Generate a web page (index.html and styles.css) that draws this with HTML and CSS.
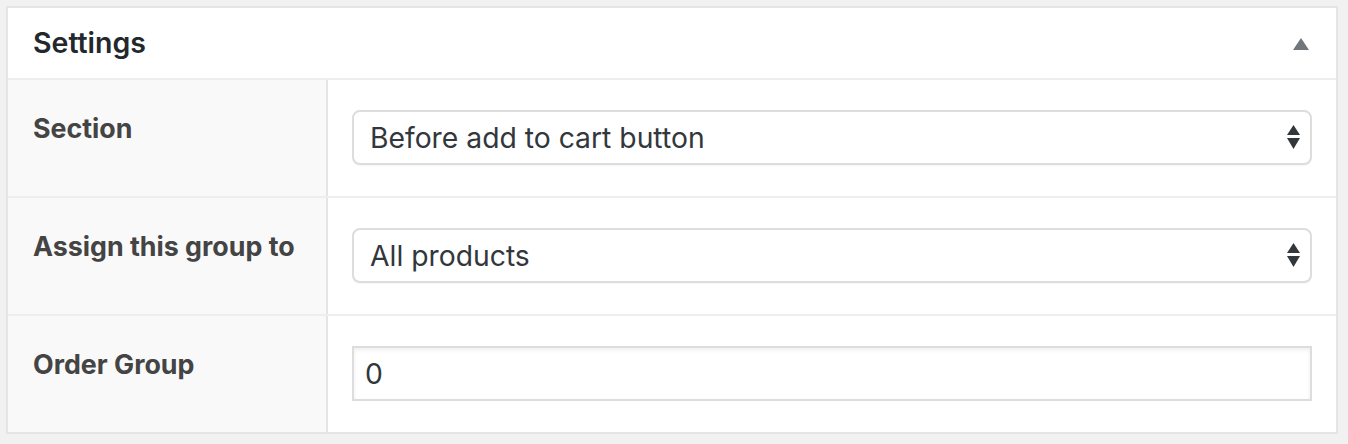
FILE: index.html
```html
<!DOCTYPE html>
<html>
<head>
<meta charset="utf-8">
<link rel="stylesheet" href="styles.css">
</head>
<body>
<div class="panel">
  <div class="panel-head">
    <h2 class="panel-title">Settings</h2>
    <svg class="toggle" width="16" height="12" viewBox="0 0 16 12"><polygon points="8,0 16,12 0,12" fill="#72777c"/></svg>
  </div>
  <div class="rows">
    <div class="row">
      <div class="label">Section</div>
      <div class="field">
        <div class="select">
          <span class="select-text">Before add to cart button</span>
          <svg class="arrows" width="13" height="25" viewBox="0 0 13 25"><polygon points="6.5,0 13,10 0,10" fill="#32373c"/><polygon points="0,13 13,13 6.5,24" fill="#32373c"/></svg>
        </div>
      </div>
    </div>
    <div class="row">
      <div class="label">Assign this group to</div>
      <div class="field">
        <div class="select">
          <span class="select-text">All products</span>
          <svg class="arrows" width="13" height="25" viewBox="0 0 13 25"><polygon points="6.5,0 13,10 0,10" fill="#32373c"/><polygon points="0,13 13,13 6.5,24" fill="#32373c"/></svg>
        </div>
      </div>
    </div>
    <div class="row last">
      <div class="label">Order Group</div>
      <div class="field">
        <div class="input">0</div>
      </div>
    </div>
  </div>
</div>
</body>
</html>
```

FILE: styles.css
```css
html, body {
  margin: 0;
  padding: 0;
  background: #f1f1f1;
}
body {
  padding: 6px 0 0 6px;
  font-family: Inter, "Liberation Sans", sans-serif;
}
.panel {
  width: 1328px;
  background: #fff;
  border: 2px solid #e5e5e5;
  box-shadow: 0 1px 1px rgba(0,0,0,0.04);
}
.panel-head {
  height: 70px;
  border-bottom: 2px solid #eeeeee;
  display: flex;
  align-items: center;
  justify-content: space-between;
  padding: 1px 27px 0 25px;
  box-sizing: border-box;
  height: 72px;
}
.panel-title {
  margin: 0;
  font-size: 28.5px;
  font-weight: 600;
  color: #23282d;
  line-height: 1;
}
.toggle {
  display: block;
}
.row {
  display: grid;
  grid-template-columns: 320px 1fr;
  height: 116px;
  border-bottom: 2px solid #eeeeee;
}
.row.last {
  border-bottom: none;
}
.label {
  background: #f9f9f9;
  border-right: 2px solid #e5e5e5;
  padding: 33px 0 0 25px;
  font-size: 26.8px;
  font-weight: 700;
  color: #444444;
  line-height: 30px;
}
.field {
  padding: 30px 24px;
}
.select {
  height: 51px;
  border: 2px solid #dddddd;
  border-radius: 8px;
  box-shadow: 0 1px 1px rgba(0,0,0,0.04);
  display: flex;
  align-items: center;
  justify-content: space-between;
  padding: 0 10px 0 16px;
  background: #fff;
}
.select-text {
  font-size: 28.3px;
  color: #32373c;
}
.arrows {
  display: block;
}
.input {
  height: 51px;
  border: 2px solid #dddddd;
  box-shadow: inset 0 2px 4px rgba(0,0,0,0.07);
  display: flex;
  align-items: center;
  padding: 0 11px;
  font-size: 28.3px;
  color: #32373c;
}
```
